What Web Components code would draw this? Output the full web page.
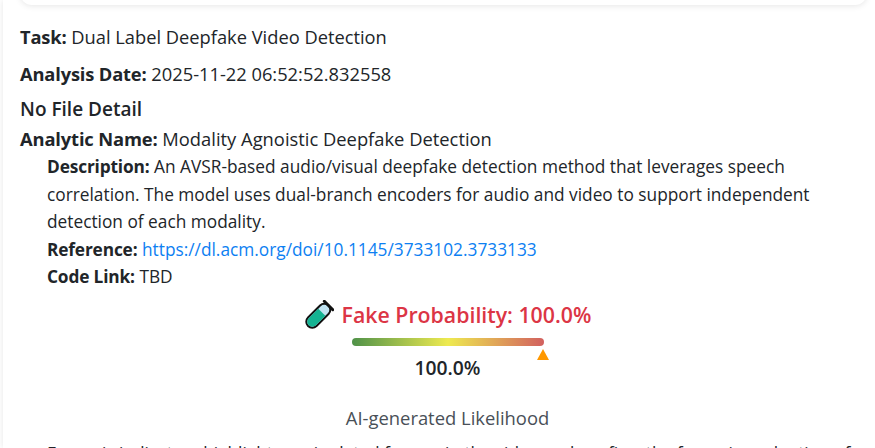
<!DOCTYPE html>
<html lang="en">
<head>
<meta charset="utf-8">
<title>Analysis result</title>
<style>
  html, body { margin: 0; height: 100%; overflow: hidden; background: #fff; }
  body { font-family: "Open Sans", "Noto Sans", "Liberation Sans", sans-serif; color: #212529; }
</style>
</head>
<body>
<result-panel>
  <top-card></top-card>
  <info-line label="Task:" value="Dual Label Deepfake Video Detection" gap="20"></info-line>
  <info-line label="Analysis Date:" value="2025-11-22 06:52:52.832558" gap="13"></info-line>
  <section-title>No File Detail</section-title>
  <analytic-block name="Modality Agnoistic Deepfake Detection"
    reference="https://dl.acm.org/doi/10.1145/3733102.3733133" code="TBD">An AVSR-based audio/visual deepfake detection method that leverages speech correlation. The model uses dual-branch encoders for audio and video to support independent detection of each modality.</analytic-block>
  <probability-meter value="100.0" caption="AI-generated Likelihood"></probability-meter>
  <note-text>Forensic indicators highlight manipulated frames in the video and confirm the forensic evaluation of each</note-text>
</result-panel>

<script>
class ResultPanel extends HTMLElement {
  constructor() {
    super();
    this.attachShadow({ mode: 'open' });
    this.shadowRoot.innerHTML = `
      <style>
        :host { display: block; height: 448px; overflow: hidden; background: #fff; box-shadow: 0 0 6px rgba(0,0,0,.1); margin-left: 3px; padding: 0 0 0 17px; }
      </style>
      <slot></slot>
    `;
  }
}
customElements.define('result-panel', ResultPanel);

class TopCard extends HTMLElement {
  constructor() {
    super();
    this.attachShadow({ mode: 'open' });
    this.shadowRoot.innerHTML = `
      <style>
        :host { display: block; height: 25px; margin: -20px 8px 0 0; background: #fff; border-radius: 12px; box-shadow: 0 1px 6px rgba(0,0,0,.1); }
      </style>
    `;
  }
}
customElements.define('top-card', TopCard);

class InfoLine extends HTMLElement {
  constructor() {
    super();
    this.attachShadow({ mode: 'open' });
    this.shadowRoot.innerHTML = `
      <style>
        :host { display: block; line-height: 24px; font-size: 18.3px; margin-top: ${this.getAttribute('gap') || 0}px; }
        b { font-weight: 700; letter-spacing: -.15px; }
      </style>
      <b>${this.getAttribute('label')}</b> ${this.getAttribute('value')}
    `;
  }
}
customElements.define('info-line', InfoLine);

class SectionTitle extends HTMLElement {
  constructor() {
    super();
    this.attachShadow({ mode: 'open' });
    this.shadowRoot.innerHTML = `
      <style>
        :host { display: block; margin-top: 11px; font-size: 19px; line-height: 24px; font-weight: 600; }
      </style>
      <slot></slot>
    `;
  }
}
customElements.define('section-title', SectionTitle);

class AnalyticBlock extends HTMLElement {
  constructor() {
    super();
    this.attachShadow({ mode: 'open' });
    const ref = this.getAttribute('reference');
    this.shadowRoot.innerHTML = `
      <style>
        :host { display: block; margin-top: 6px; }
        .name { font-size: 18.35px; line-height: 24px; }
        .body { margin-left: 27px; max-width: 780px; font-size: 17.3px; line-height: 27.5px; margin-top: 2px; }
        b { font-weight: 700; letter-spacing: -.15px; }
        a { color: #0d80f2; text-decoration: none; }
      </style>
      <div class="name"><b>Analytic Name:</b> ${this.getAttribute('name')}</div>
      <div class="body">
        <div><b>Description:</b> <slot></slot></div>
        <div><b>Reference:</b> <a href="${ref}">${ref}</a></div>
        <div><b>Code Link:</b> ${this.getAttribute('code')}</div>
      </div>
    `;
  }
}
customElements.define('analytic-block', AnalyticBlock);

class ProbabilityMeter extends HTMLElement {
  constructor() {
    super();
    this.attachShadow({ mode: 'open' });
    const v = this.getAttribute('value');
    this.shadowRoot.innerHTML = `
      <style>
        :host { display: flex; flex-direction: column; align-items: center; margin-top: 9px; }
        .head { display: flex; align-items: center; gap: 8px; color: #dc3545; font-size: 21.3px; font-weight: 600; line-height: 30px; }
        svg.tube { width: 30px; height: 30px; display: block; }
        .track { position: relative; width: 192px; height: 8px; margin-top: 8px; border-radius: 4px;
                 background: linear-gradient(90deg, #4f9249, #eeea50 50%, #d2605f); }
        .mark { position: absolute; right: -5px; top: 11px; width: 0; height: 0;
                border-left: 6px solid transparent; border-right: 6px solid transparent; border-bottom: 11px solid #ff9800; }
        .val { margin-top: 8px; font-size: 19.3px; font-weight: 600; line-height: 28px; color: #212529; }
        .cap { margin-top: 22px; font-size: 18.4px; line-height: 28px; color: #495057; }
      </style>
      <div class="head">
        <svg class="tube" viewBox="0 0 30 30">
          <g transform="rotate(45 15 15)">
            <rect x="9" y="1.5" width="12" height="29" rx="6" fill="#bfe3f2" stroke="#111" stroke-width="2"/>
            <path d="M10 11 H20 V24.5 a5 5 0 0 1 -10 0 Z" fill="#14b392"/>
            <rect x="7.5" y="0" width="15" height="3" rx="1.5" fill="#111"/>
          </g>
        </svg>
        <span>Fake Probability: ${v}%</span>
      </div>
      <div class="track"><div class="mark"></div></div>
      <div class="val">${v}%</div>
      <div class="cap">${this.getAttribute('caption')}</div>
    `;
  }
}
customElements.define('probability-meter', ProbabilityMeter);

class NoteText extends HTMLElement {
  constructor() {
    super();
    this.attachShadow({ mode: 'open' });
    this.shadowRoot.innerHTML = `
      <style>
        :host { display: block; margin: 8px 0 0 27px; font-size: 17.3px; line-height: 27px; white-space: nowrap; }
      </style>
      <slot></slot>
    `;
  }
}
customElements.define('note-text', NoteText);
</script>
</body>
</html>
